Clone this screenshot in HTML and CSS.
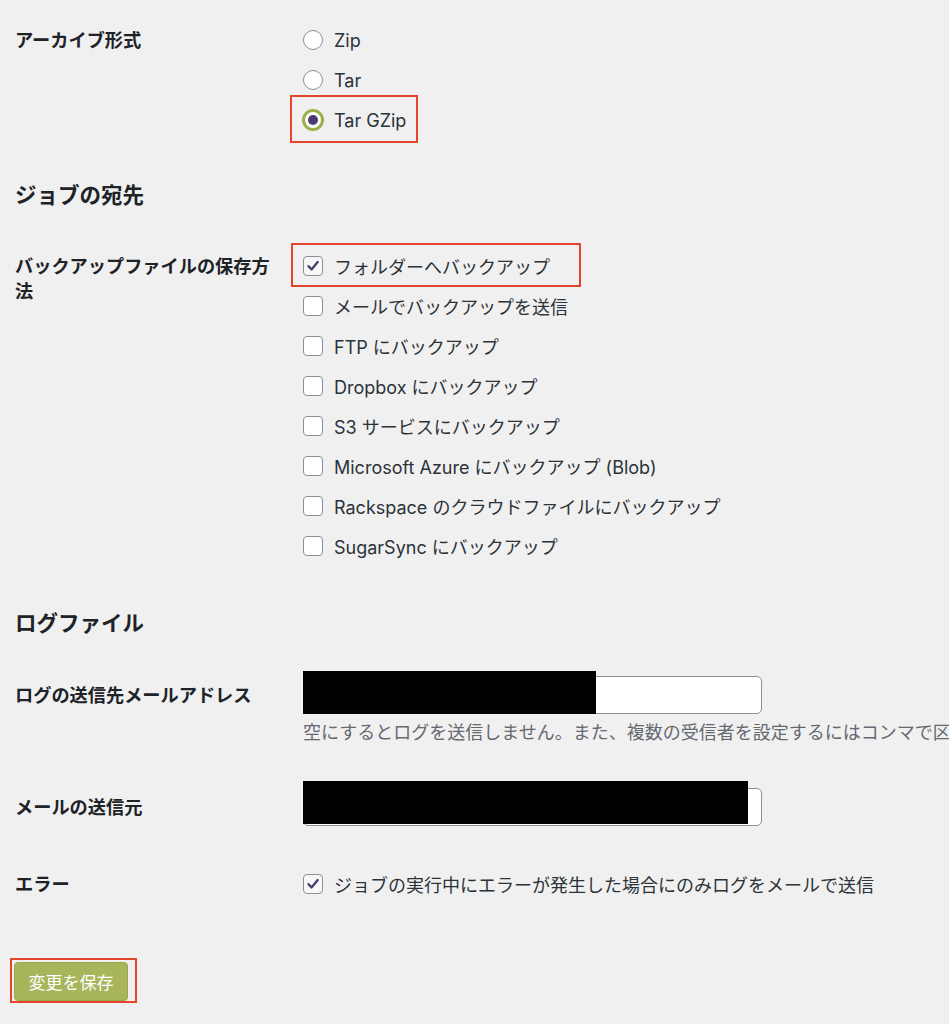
FILE: index.html
```
<!DOCTYPE html>
<html lang="ja">
<head>
    <meta charset="UTF-8">
    <title>ジョブ設定</title>
    <link rel="stylesheet" href="styles.css">
</head>
<body>
    <form class="settings">
        <!-- Archive format -->
        <div class="form-row">
            <div class="field-label">アーカイブ形式</div>
            <div class="field-control">
                <label class="option">
                    <span class="radio"></span>Zip
                </label>
                <label class="option">
                    <span class="radio"></span>Tar
                </label>
                <label class="option marked">
                    <span class="radio checked"></span>Tar GZip
                </label>
            </div>
        </div>

        <h2 class="section-title first">ジョブの宛先</h2>

        <div class="form-row">
            <div class="field-label wrap">バックアップファイルの保存方法</div>
            <div class="field-control">
                <label class="option marked wide">
                    <span class="checkbox checked">
                        <svg viewBox="0 0 20 20" width="20" height="20"><path d="M5 10.2l3.4 3.6L15.2 5.6" fill="none" stroke="#4e3b6e" stroke-width="2.6" stroke-linecap="round" stroke-linejoin="round"/></svg>
                    </span>フォルダーへバックアップ
                </label>
                <label class="option"><span class="checkbox"></span>メールでバックアップを送信</label>
                <label class="option"><span class="checkbox"></span>FTP にバックアップ</label>
                <label class="option"><span class="checkbox"></span>Dropbox にバックアップ</label>
                <label class="option"><span class="checkbox"></span>S3 サービスにバックアップ</label>
                <label class="option"><span class="checkbox"></span>Microsoft Azure にバックアップ (Blob)</label>
                <label class="option"><span class="checkbox"></span>Rackspace のクラウドファイルにバックアップ</label>
                <label class="option"><span class="checkbox"></span>SugarSync にバックアップ</label>
            </div>
        </div>

        <h2 class="section-title second">ログファイル</h2>

        <div class="form-row">
            <div class="field-label tall">ログの送信先メールアドレス</div>
            <div class="field-control">
                <div class="input-wrap">
                    <input type="text" class="text-input">
                    <span class="redact redact-short"></span>
                </div>
                <p class="description">空にするとログを送信しません。また、複数の受信者を設定するにはコンマで区切ってください。</p>
            </div>
        </div>

        <div class="form-row sender-row">
            <div class="field-label tall">メールの送信元</div>
            <div class="field-control">
                <div class="input-wrap">
                    <input type="text" class="text-input">
                    <span class="redact redact-long"></span>
                </div>
            </div>
        </div>

        <div class="form-row error-row">
            <div class="field-label">エラー</div>
            <div class="field-control">
                <label class="option">
                    <span class="checkbox checked">
                        <svg viewBox="0 0 20 20" width="20" height="20"><path d="M5 10.2l3.4 3.6L15.2 5.6" fill="none" stroke="#4e3b6e" stroke-width="2.6" stroke-linecap="round" stroke-linejoin="round"/></svg>
                    </span>ジョブの実行中にエラーが発生した場合にのみログをメールで送信
                </label>
            </div>
        </div>

        <div class="submit">
            <div class="btn-mark">
                <button type="button" class="save-btn">変更を保存</button>
            </div>
        </div>
    </form>
</body>
</html>
```
FILE: styles.css
```
/* General Styles */
body {
    margin: 0;
    padding: 20px 0 0 15px;
    background-color: #f0f0f1;
    color: #1d2327;
    font-family: Inter, "Noto Sans CJK JP", sans-serif;
    font-size: 18px;
    overflow: hidden;
}

.settings {
    width: 934px;
}

.form-row {
    display: grid;
    grid-template-columns: 288px 1fr;
}

.field-label {
    font-weight: 700;
    font-size: 18.2px;
    line-height: 40px;
    white-space: nowrap;
}

.field-label.wrap {
    width: 262px;
    line-height: 25px;
    padding-top: 8px;
    white-space: normal;
}

.field-label.tall {
    line-height: 38px;
}

.field-control {
    display: flex;
    flex-direction: column;
    align-items: flex-start;
    min-width: 0;
}

/* Headings */
.section-title {
    font-size: 21.5px;
    font-weight: 700;
    line-height: 30px;
    margin: 0;
}

.section-title.first {
    margin: 40px 0 36px;
}

.section-title.second {
    margin: 42px 0 38px;
}

/* Radio & checkbox options */
.option {
    position: relative;
    display: inline-flex;
    align-items: center;
    height: 40px;
    color: #2c3338;
    white-space: nowrap;
}

.option.marked::after {
    content: "";
    position: absolute;
    left: -13px;
    right: -12px;
    top: -5px;
    bottom: -3px;
    border: 2px solid #e4452b;
}

.option.marked.wide::after {
    left: -12px;
    right: -31px;
    top: -3px;
    bottom: -1px;
}

.radio {
    width: 20px;
    height: 20px;
    box-sizing: border-box;
    border: 1px solid #8c8f94;
    border-radius: 50%;
    background-color: #fff;
    margin-right: 11px;
    display: inline-flex;
    align-items: center;
    justify-content: center;
}

.radio.checked {
    border: 3px solid #9bb04a;
    width: 22px;
    height: 22px;
    margin-left: -1px;
    margin-right: 10px;
}

.radio.checked::before {
    content: "";
    width: 10px;
    height: 10px;
    border-radius: 50%;
    background-color: #4b3a6b;
}

.checkbox {
    width: 20px;
    height: 20px;
    box-sizing: border-box;
    border: 1px solid #8c8f94;
    border-radius: 4px;
    background-color: #fff;
    margin-right: 11px;
    display: inline-flex;
    align-items: center;
    justify-content: center;
}

.checkbox.checked {
    background-color: #f6f7f7;
}

.checkbox svg {
    display: block;
    width: 18px;
    height: 18px;
}

/* Text inputs */
.input-wrap {
    position: relative;
    width: 459px;
    height: 38px;
}

.text-input {
    width: 100%;
    height: 38px;
    box-sizing: border-box;
    border: 1px solid #8c8f94;
    border-radius: 5px;
    background-color: #fff;
    margin: 0;
    padding: 0 10px;
}

.redact {
    position: absolute;
    left: 0;
    background-color: #000;
}

.redact-short {
    top: -5px;
    width: 293px;
    height: 43px;
}

.redact-long {
    top: -7px;
    width: 445px;
    height: 43px;
}

.description {
    margin: 6px 0 0;
    line-height: 26px;
    font-size: 18px;
    color: #646970;
    white-space: nowrap;
}

.sender-row {
    margin-top: 42px;
}

.error-row {
    margin-top: 38px;
}

/* Submit */
.submit {
    display: flex;
    margin-top: 54px;
    margin-left: -5px;
}

.btn-mark {
    display: flex;
    border: 2px solid #e4452b;
    padding: 2px 7px 0 2px;
}

.save-btn {
    display: block;
    width: 114px;
    height: 39px;
    margin: 0;
    padding: 0;
    background-color: #a8b55a;
    border: 1px solid #9aa74d;
    border-radius: 4px;
    color: #fff;
    font-family: inherit;
    font-size: 17px;
}
```
